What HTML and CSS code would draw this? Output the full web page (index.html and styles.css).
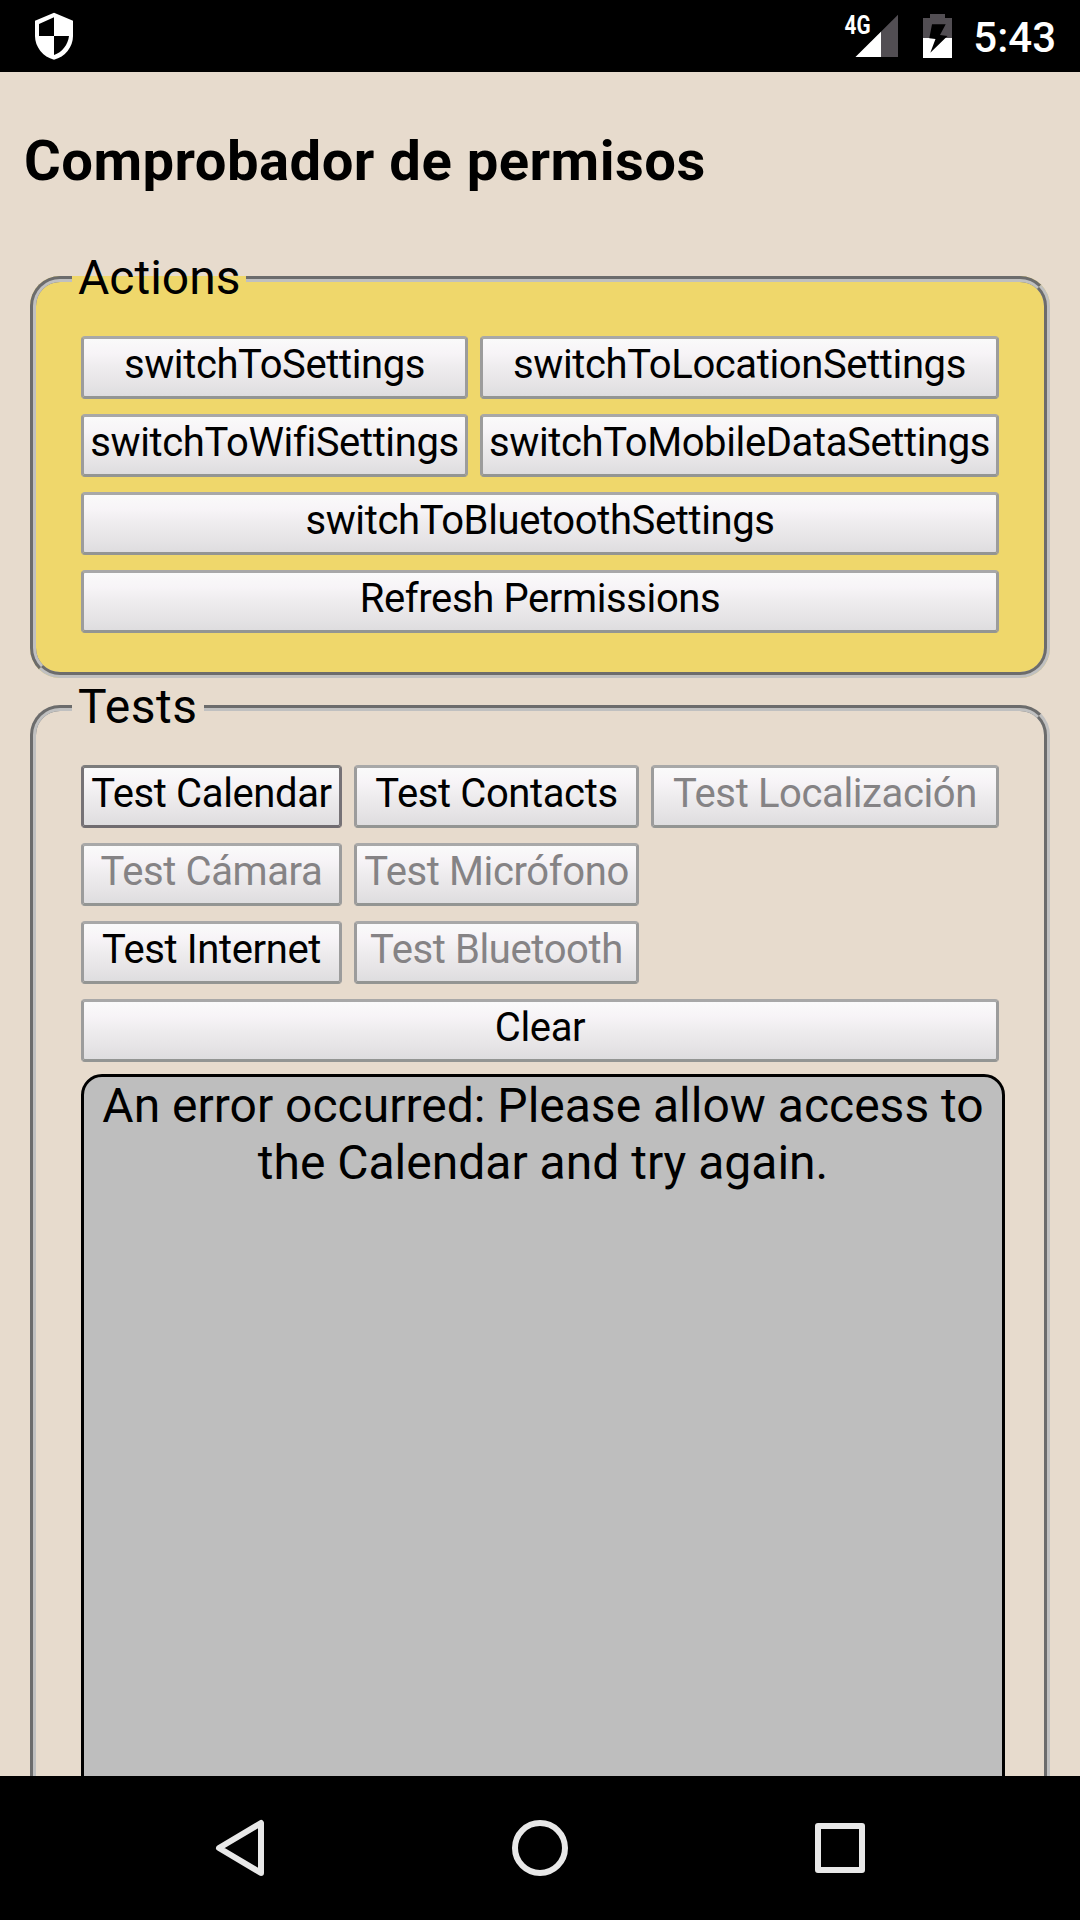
FILE: index.html
```html
<!DOCTYPE html>
<html lang="es">
<head>
<meta charset="utf-8">
<title>Comprobador de permisos</title>
<link rel="stylesheet" href="styles.css">
</head>
<body>
<header class="status-bar">
  <svg class="shield" width="38" height="48" viewBox="35 12 38 48">
    <path fill="#fff" d="M54 12.7 73 20.8V36c0 11-8 21-19 23.700C43 57 35 47 35 36V20.8z"/>
    <path d="M54 17.3V36H39V24zM54 36h15c-1 8.700-7 16.500-15 19z"/>
  </svg>
  <div class="status-icons">
    <svg width="58" height="56" viewBox="840 8 58 56">
      <path fill="#524e53" d="M898 14.700V57H855.500z"/>
      <path fill="#fff" d="M881 31.700V57H855.500z"/>
      <text class="network" x="844.500" y="33.500" textLength="26" lengthAdjust="spacingAndGlyphs">4G</text>
    </svg>
    <svg width="29" height="44" viewBox="923 14 29 44">
      <path fill="#524e53" d="M930 14h15v4h7v20h-29V18h7z"/>
      <path fill="#fff" d="M923 38h29v20h-29z"/>
      <path d="M932 24.300h13.700L940 35l7.500 1-17.200 16.700L935.500 39l-6.200-.7z"/>
    </svg>
    <span class="clock">5:43</span>
  </div>
</header>

<main class="page">
  <h3 class="title">Comprobador de permisos</h3>

  <fieldset class="group group-actions">
    <legend class="legend">Actions</legend>
    <div class="grid grid-actions">
      <button class="btn">switchToSettings</button>
      <button class="btn">switchToLocationSettings</button>
      <button class="btn">switchToWifiSettings</button>
      <button class="btn">switchToMobileDataSettings</button>
      <button class="btn btn-wide">switchToBluetoothSettings</button>
      <button class="btn btn-wide">Refresh Permissions</button>
    </div>
  </fieldset>

  <fieldset class="group group-tests">
    <legend class="legend">Tests</legend>
    <div class="grid grid-tests">
      <button class="btn btn-active">Test Calendar</button>
      <button class="btn">Test Contacts</button>
      <button class="btn" disabled>Test Localización</button>
      <button class="btn" disabled>Test Cámara</button>
      <button class="btn" disabled>Test Micrófono</button>
      <button class="btn row-start">Test Internet</button>
      <button class="btn" disabled>Test Bluetooth</button>
      <button class="btn btn-wide">Clear</button>
    </div>
    <div class="output">An error occurred: Please allow access to the Calendar and try again.</div>
  </fieldset>
</main>

<nav class="nav-bar">
  <svg width="60" height="60" viewBox="210 1818 60 60"><path d="M261 1823v50l-42-25z"/></svg>
  <svg width="60" height="60" viewBox="510 1818 60 60"><circle cx="540" cy="1848" r="25"/></svg>
  <svg width="60" height="60" viewBox="810 1818 60 60"><rect x="818" y="1826" width="44" height="44"/></svg>
</nav>
</body>
</html>
```
FILE: styles.css
```css
* {
  box-sizing: border-box;
}

body {
  margin: 0;
  width: 1080px;
  height: 1920px;
  display: flex;
  flex-direction: column;
  overflow: hidden;
  background: #e7dbcd;
  font-family: Roboto, sans-serif;
  font-size: 48px;
  line-height: 57px;
  color: #000;
}

.status-bar {
  flex: none;
  height: 72px;
  padding: 0 24px 0 35px;
  display: flex;
  align-items: center;
  justify-content: space-between;
  background: #000;
}

.status-icons {
  display: flex;
  align-items: center;
  gap: 25px;
}

.network {
  font-size: 25px;
  font-weight: 700;
  fill: #fff;
}

.clock {
  margin-left: -4px;
  padding-top: 2px;
  font-size: 42px;
  font-weight: 500;
  color: #fff;
}

.page {
  flex: 1;
  min-height: 0;
  overflow: hidden;
  padding: 0 30px;
}

.title {
  margin: 56px 0 55px -6px;
  font-size: 56.16px;
  line-height: 66px;
  font-weight: 700;
  letter-spacing: 0.48px;
}

.group {
  margin: 0;
  min-width: 0;
  border: 6px groove #c0c0c0;
  border-radius: 30px;
  padding: 27px 36px 39px;
}

.group-actions {
  background: #efd76b;
}

.group-tests {
  height: 1300px;
}

.legend {
  padding: 0 6px 3px;
}

.group-tests .legend {
  letter-spacing: 0.5px;
}

.grid {
  display: grid;
  grid-auto-rows: 63px;
  gap: 15px 12px;
  padding-left: 9px;
}

.grid-actions {
  grid-template-columns: 387px 519px;
}

.grid-tests {
  grid-template-columns: 261px 285px 348px;
}

.btn {
  padding: 0 0 7px;
  border: 3px solid;
  border-color: #a8a8a8 #9c9c9c #939593;
  border-radius: 4px;
  background: linear-gradient(#fafafa, #f7f4f7 25%, #eeecee 50%, #e6e4e6 78%, #dedddf);
  font: 40px/47px Roboto, sans-serif;
  letter-spacing: -0.38px;
  color: #000;
  white-space: nowrap;
}

.btn:disabled {
  color: #858385;
}

.btn-active {
  border-color: #7c7c7c #767276 #706c70;
}

.btn-wide {
  grid-column: 1 / -1;
}

.row-start {
  grid-column-start: 1;
}

.output {
  width: 924px;
  height: 900px;
  margin: 12px 0 0 9px;
  border: 3px solid #000;
  border-radius: 21px;
  background: #bebebe;
  text-align: center;
}

.nav-bar {
  flex: none;
  height: 144px;
  display: flex;
  align-items: center;
  justify-content: center;
  gap: 240px;
  background: #000;
}

.nav-bar svg {
  fill: none;
  stroke: #e8e8e8;
  stroke-width: 6px;
  stroke-linejoin: round;
}
```
